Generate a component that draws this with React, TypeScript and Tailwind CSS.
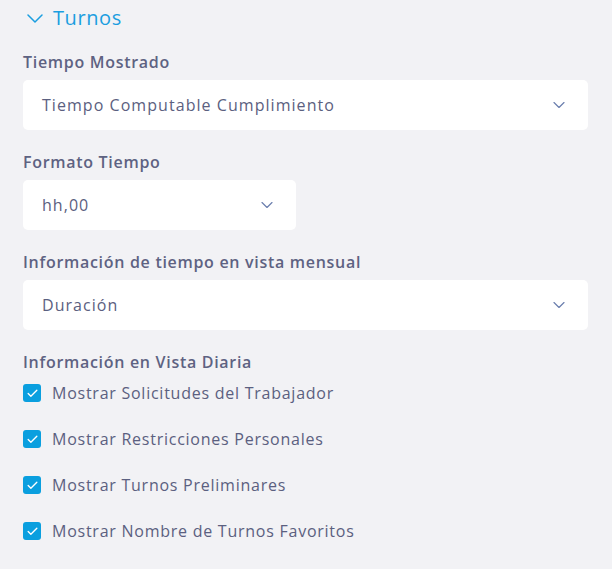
import { ChevronDown, Check } from 'lucide-react'

function Select({ value, width }: { value: string; width: string }) {
  return (
    <div className={`${width} h-[50px] bg-white rounded-[5px] flex items-center justify-between pl-[19px] pr-[19px]`}>
      <span className="text-[16px] text-[#5b6080] tracking-[1.05px]">{value}</span>
      <ChevronDown size={20} strokeWidth={1.4} className="text-[#6b7fae]" />
    </div>
  )
}

function Label({ children }: { children: string }) {
  return <p className="pt-[1px] text-[16px] font-semibold text-[#5e6282] leading-5 tracking-[0.7px]">{children}</p>
}

function Checkbox({ label }: { label: string }) {
  return (
    <label className="flex items-center gap-[11px] h-[46px]">
      <span className="w-[18px] h-[18px] rounded-[3px] bg-[#0a9fdf] flex items-center justify-center">
        <Check size={13} strokeWidth={2.5} className="text-white" />
      </span>
      <span className="text-[16px] text-[#5b6080] tracking-[0.75px]">{label}</span>
    </label>
  )
}

export default function App() {
  return (
    <div className="w-[612px] h-[569px] bg-[#f2f2f5] px-[23px] pt-[5px]" style={{ fontFamily: '"Open Sans", sans-serif' }}>
      <div className="flex items-center gap-[10px] pl-[4px] h-[26px]">
        <svg width="16" height="9" viewBox="0 0 16 9" fill="none" stroke="#1b9ee0" strokeWidth="1.5" strokeLinecap="round" strokeLinejoin="round">
          <path d="M1 1 L8 8 L15 1" />
        </svg>
        <span className="text-[20px] text-[#1b9ee0] tracking-[0.6px]">Turnos</span>
      </div>

      <div className="mt-[20px]">
        <Label>Tiempo Mostrado</Label>
        <div className="mt-[8px]"><Select value="Tiempo Computable Cumplimiento" width="w-[565px]" /></div>
      </div>

      <div className="mt-[21px]">
        <Label>Formato Tiempo</Label>
        <div className="mt-[8px]"><Select value="hh,00" width="w-[273px]" /></div>
      </div>

      <div className="mt-[21px]">
        <Label>Información de tiempo en vista mensual</Label>
        <div className="mt-[8px]"><Select value="Duración" width="w-[565px]" /></div>
      </div>

      <div className="mt-[21px]">
        <Label>Información en Vista Diaria</Label>
        <div className="-mt-[2px]">
          <Checkbox label="Mostrar Solicitudes del Trabajador" />
          <Checkbox label="Mostrar Restricciones Personales" />
          <Checkbox label="Mostrar Turnos Preliminares" />
          <Checkbox label="Mostrar Nombre de Turnos Favoritos" />
        </div>
      </div>
    </div>
  )
}
